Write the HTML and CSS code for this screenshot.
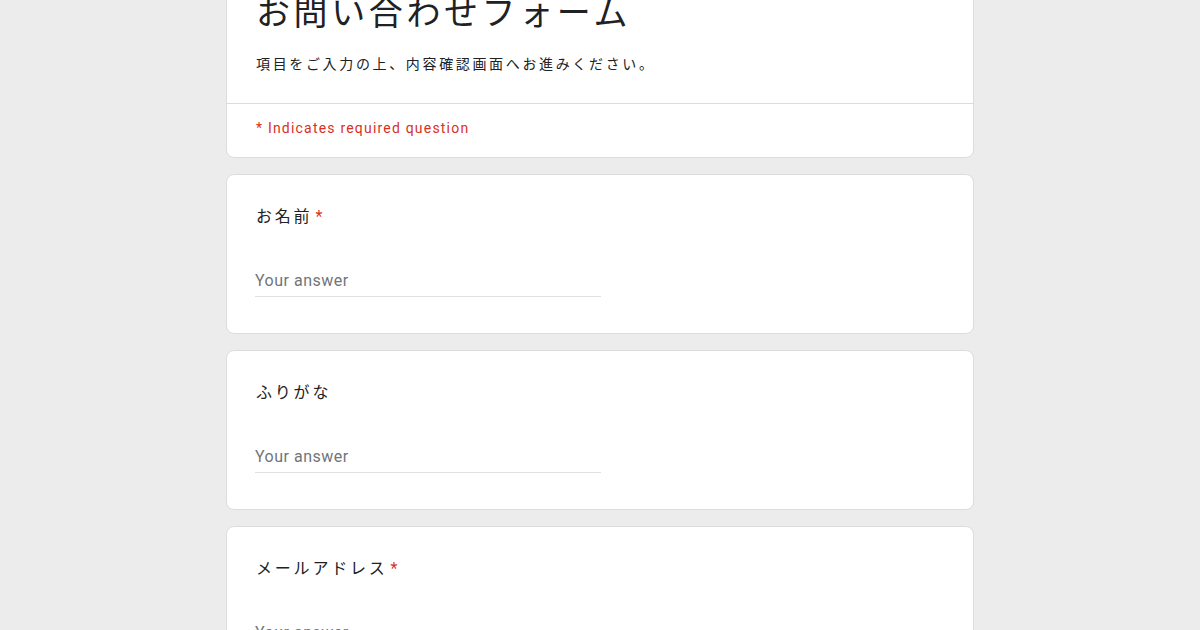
FILE: index.html
```html
<!DOCTYPE html>
<html lang="ja">
<head>
<meta charset="utf-8">
<title>お問い合わせフォーム</title>
<link rel="stylesheet" href="styles.css">
</head>
<body>
<main class="page">
  <section class="card header-card">
    <div class="header-top">
      <h1 class="form-title">お問い合わせフォーム</h1>
      <p class="form-desc">項目をご入力の上、内容確認画面へお進みください。</p>
    </div>
    <div class="header-bottom">
      <span class="req-note">* Indicates required question</span>
    </div>
  </section>

  <section class="card question">
    <div class="q-title">お名前<span class="star">*</span></div>
    <div class="answer"><span class="placeholder">Your answer</span></div>
  </section>

  <section class="card question">
    <div class="q-title">ふりがな</div>
    <div class="answer"><span class="placeholder">Your answer</span></div>
  </section>

  <section class="card question">
    <div class="q-title">メールアドレス<span class="star">*</span></div>
    <div class="answer"><span class="placeholder">Your answer</span></div>
  </section>
</main>
</body>
</html>
```

FILE: styles.css
```css
* { box-sizing: border-box; }

html, body {
  margin: 0;
  padding: 0;
  background: #ececec;
  overflow: hidden;
}

body {
  font-family: Roboto, "Noto Sans CJK JP", sans-serif;
  color: #202124;
}

.page {
  width: 748px;
  margin: -40px auto 0;
  display: flex;
  flex-direction: column;
  gap: 16px;
}

.card {
  background: #fff;
  border: 1px solid #dadce0;
  border-radius: 8px;
}

.header-top {
  padding: 28px 29px 29px;
  border-bottom: 1px solid #dadce0;
}

.form-title {
  margin: 0;
  font-weight: 400;
  font-size: 34px;
  line-height: 48px;
  letter-spacing: 3.6px;
  font-family: Roboto, "Noto Sans CJK JP", sans-serif;
}

.form-desc {
  margin: 17px 0 0;
  font-size: 14px;
  line-height: 20px;
  letter-spacing: 2.65px;
}

.header-bottom {
  padding: 12px 29px 17px;
}

.req-note {
  color: #d93025;
  font-size: 14px;
  line-height: 24px;
  letter-spacing: 1.2px;
}

.question {
  padding: 30px 29px 36px;
  height: 160px;
}

.q-title {
  font-size: 16px;
  line-height: 24px;
  letter-spacing: 2.8px;
}

.star {
  color: #d93025;
  margin-left: 3px;
}

.answer {
  margin-top: 35px;
  width: 346px;
  height: 33px;
  margin-left: -1px;
  border-bottom: 1px solid #e0e0e0;
  display: flex;
  align-items: center;
}

.placeholder {
  color: #70757a;
  font-size: 16px;
  letter-spacing: 0.5px;
  margin-top: 1px;
}
```
